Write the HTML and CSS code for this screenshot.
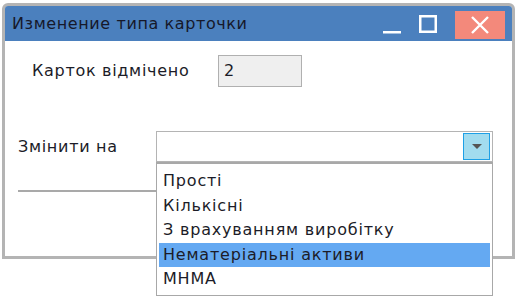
FILE: index.html
```html
<!DOCTYPE html>
<html lang="uk">
<head>
    <meta charset="UTF-8">
    <title>Изменение типа карточки</title>
    <link rel="stylesheet" href="styles.css">
</head>
<body>
    <div class="window">
        <div class="titlebar">
            <span class="title">Изменение типа карточки</span>
            <span class="tb-btn tb-min">
                <svg width="20" height="20" viewBox="0 0 20 20"><rect x="1" y="17" width="18" height="2.5" fill="#fff"/></svg>
            </span>
            <span class="tb-btn tb-max">
                <svg width="20" height="20" viewBox="0 0 20 20"><rect x="2.25" y="2.25" width="15.5" height="15.5" fill="none" stroke="#fff" stroke-width="2.5"/></svg>
            </span>
            <span class="tb-close">
                <svg width="22" height="18" viewBox="0 0 22 18"><path d="M3 1 L19 17 M19 1 L3 17" stroke="#fff" stroke-width="2.4"/></svg>
            </span>
        </div>
        <div class="content">
            <div class="row row-count">
                <span class="label">Карток відмічено</span>
                <span class="field">2</span>
            </div>
            <div class="row row-change">
                <span class="label">Змінити на</span>
                <div class="combo">
                    <div class="combo-box">
                        <span class="combo-btn">
                            <svg width="12" height="8" viewBox="0 0 12 8"><path d="M1 1 L11 1 L6 6 Z" fill="#555"/></svg>
                        </span>
                    </div>
                    <ul class="combo-list">
                        <li>Прості</li>
                        <li>Кількісні</li>
                        <li>З врахуванням виробітку</li>
                        <li class="selected">Нематеріальні активи</li>
                        <li>МНМА</li>
                    </ul>
                </div>
            </div>
            <div class="separator"></div>
        </div>
    </div>
</body>
</html>
```

FILE: styles.css
```css
html,body,div,ul,li{
    margin: 0;
    padding: 0;
}
html,body{
    min-height: 303px;
}
body{
    font: 16px/1.2 "DejaVu Sans", Verdana, sans-serif;
    letter-spacing: 0.7px;
    color: #1c1c28;
    background: #fff;
}
ul{
    list-style-type: none;
}
.window{
    position: relative;
    box-sizing: border-box;
    width: 513px;
    height: 256px;
    margin: 3px 0 0 2px;
    border: 3px solid #b4b4b4;
    border-radius: 6px 6px 0 0;
    background: #fff;
}
.titlebar{
    display: flex;
    align-items: flex-start;
    height: 35px;
    background: #4b80be;
    border-radius: 3px 3px 0 0;
}
.title{
    flex: 1;
    padding: 8px 0 0 7px;
    letter-spacing: 0.6px;
    color: #16182a;
}
.tb-btn{
    display: flex;
    margin-top: 8px;
}
.tb-min{
    margin-right: 16px;
}
.tb-max{
    margin-right: 17px;
}
.tb-close{
    display: flex;
    align-items: center;
    justify-content: center;
    width: 50px;
    height: 28px;
    margin: 5px 7px 0 0;
    background: #f3897b;
}
.content{
    position: relative;
}
.row{
    display: flex;
    align-items: center;
}
.row-count{
    padding: 14px 0 0 27px;
}
.row-count .label{
    width: 186px;
}
.field{
    box-sizing: border-box;
    width: 84px;
    height: 32px;
    padding: 5px 0 0 5px;
    border: 1px solid #b0b0b0;
    background: #efefef;
}
.row-change{
    padding: 44px 0 0 13px;
}
.row-change .label{
    width: 138px;
}
.combo{
    position: relative;
    z-index: 2;
}
.combo-box{
    box-sizing: border-box;
    display: flex;
    justify-content: flex-end;
    width: 337px;
    height: 32px;
    padding: 1px 2px 0 0;
    border: 1px solid #b4b4b4;
    border-bottom-width: 2px;
}
.combo-btn{
    box-sizing: border-box;
    display: flex;
    align-items: center;
    justify-content: center;
    width: 27px;
    height: 27px;
    border: 1px solid #1ea0e6;
    background: #a2dcef;
}
.combo-list{
    position: absolute;
    top: 31px;
    left: 0;
    box-sizing: border-box;
    width: 337px;
    padding: 5px 2px 3px 2px;
    border: 1px solid #a8a8a8;
    border-top-width: 2px;
    background: #fff;
    letter-spacing: 0.8px;
}
.combo-list li{
    height: 24.5px;
    line-height: 24.5px;
    padding-left: 4px;
}
.combo-list li.selected{
    background: #64a9f2;
}
.separator{
    height: 2px;
    margin: 27px 20px 0 13px;
    background: #a9a9a9;
}
```
